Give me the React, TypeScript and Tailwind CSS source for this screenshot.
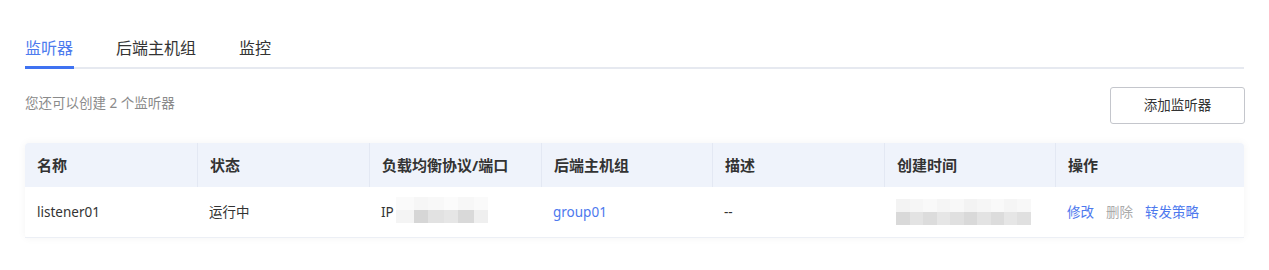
import React from "react";

const font = { fontFamily: '"Noto Sans", "Noto Sans CJK SC", sans-serif' };

function Blur({ widths, top, bottom }: { widths: number[]; top: string[]; bottom: string[] }) {
  return (
    <div className="flex flex-col blur-[0.6px]">
      <div className="flex h-[13px]">
        {widths.map((w, i) => (
          <div key={i} style={{ width: w, background: top[i % top.length] }} />
        ))}
      </div>
      <div className="flex h-[13px]">
        {widths.map((w, i) => (
          <div key={i} style={{ width: w, background: bottom[i % bottom.length] }} />
        ))}
      </div>
    </div>
  );
}

export default function App() {
  const cols = "grid grid-cols-[172px_172px_172px_171px_172px_171px_1fr]";
  const headers = ["名称", "状态", "负载均衡协议/端口", "后端主机组", "描述", "创建时间", "操作"];
  return (
    <div className="w-[1269px] h-[270px] bg-white px-[25px] pt-[36px]" style={font}>
      <div className="relative flex items-end gap-[43px] h-[33px] border-b-2 border-[#e6e9f0]">
        <div className="relative text-[16px] leading-[22px] text-[#4d7bee] pb-[8px]">
          监听器
          <div className="absolute left-0 right-[-1px] bottom-[-2px] h-[3px] bg-[#3f72f1]" />
        </div>
        <div className="text-[16px] leading-[22px] text-[#333] pb-[8px]">后端主机组</div>
        <div className="text-[16px] leading-[22px] text-[#333] pb-[8px]">监控</div>
      </div>

      <div className="flex items-center justify-between mt-[18px] h-[37px]">
        <div className="text-[13.5px] text-[#8a8a8a] -mt-[4px]">您还可以创建 2 个监听器</div>
        <button className="w-[135px] h-[37px] mr-[-1px] rounded-[3px] border border-[#c4c6cc] bg-white text-[13.5px] text-[#333]">
          添加监听器
        </button>
      </div>

      <div className="mt-[19px] rounded-[4px] shadow-[0_0_8px_rgba(0,0,0,0.05)]">
        <div className={`${cols} h-[44px] bg-[#eff3fb] rounded-t-[4px]`}>
          {headers.map((h, i) => (
            <div
              key={h}
              className={`flex items-center px-[12px] text-[15px] font-bold text-[#333] ${i > 0 ? "border-l border-[#e3e8f3]" : ""}`}
            >
              {h}
            </div>
          ))}
        </div>
        <div className={`${cols} h-[51px] border-b border-[#eceff5] text-[13.5px] text-[#333]`}>
          <div className="flex items-center px-[12px]">listener01</div>
          <div className="flex items-center px-[12px]">运行中</div>
          <div className="flex items-center px-[12px]">
            <span>IP</span>
            <div className="ml-[2px] -mt-[4px]">
              <Blur
                widths={[18, 14, 16, 14, 16, 14]}
                top={["#fafafa", "#f6f6f6", "#f8f8f8", "#fbfbfb", "#f7f7f7", "#fafafa"]}
                bottom={["#f4f4f4", "#d6d6d6", "#e2e2e2", "#e6e6e6", "#d9d9d9", "#efefef"]}
              />
            </div>
          </div>
          <div className="flex items-center px-[12px] text-[#4d79ee]">group01</div>
          <div className="flex items-center px-[12px]">--</div>
          <div className="flex items-center px-[12px]">
            <Blur
              widths={[14, 13, 14, 13, 14, 13, 14, 13, 13, 14]}
              top={["#f3f3f3", "#f6f6f6", "#f9f9f9", "#f5f5f5", "#f8f8f8"]}
              bottom={["#d9d9d9", "#e3e3e3", "#dcdcdc", "#e6e6e6", "#e0e0e0"]}
            />
          </div>
          <div className="flex items-center gap-[12px] px-[12px]">
            <span className="text-[#4d79ee]">修改</span>
            <span className="text-[#aaaaaa]">删除</span>
            <span className="text-[#4d79ee]">转发策略</span>
          </div>
        </div>
      </div>
    </div>
  );
}
